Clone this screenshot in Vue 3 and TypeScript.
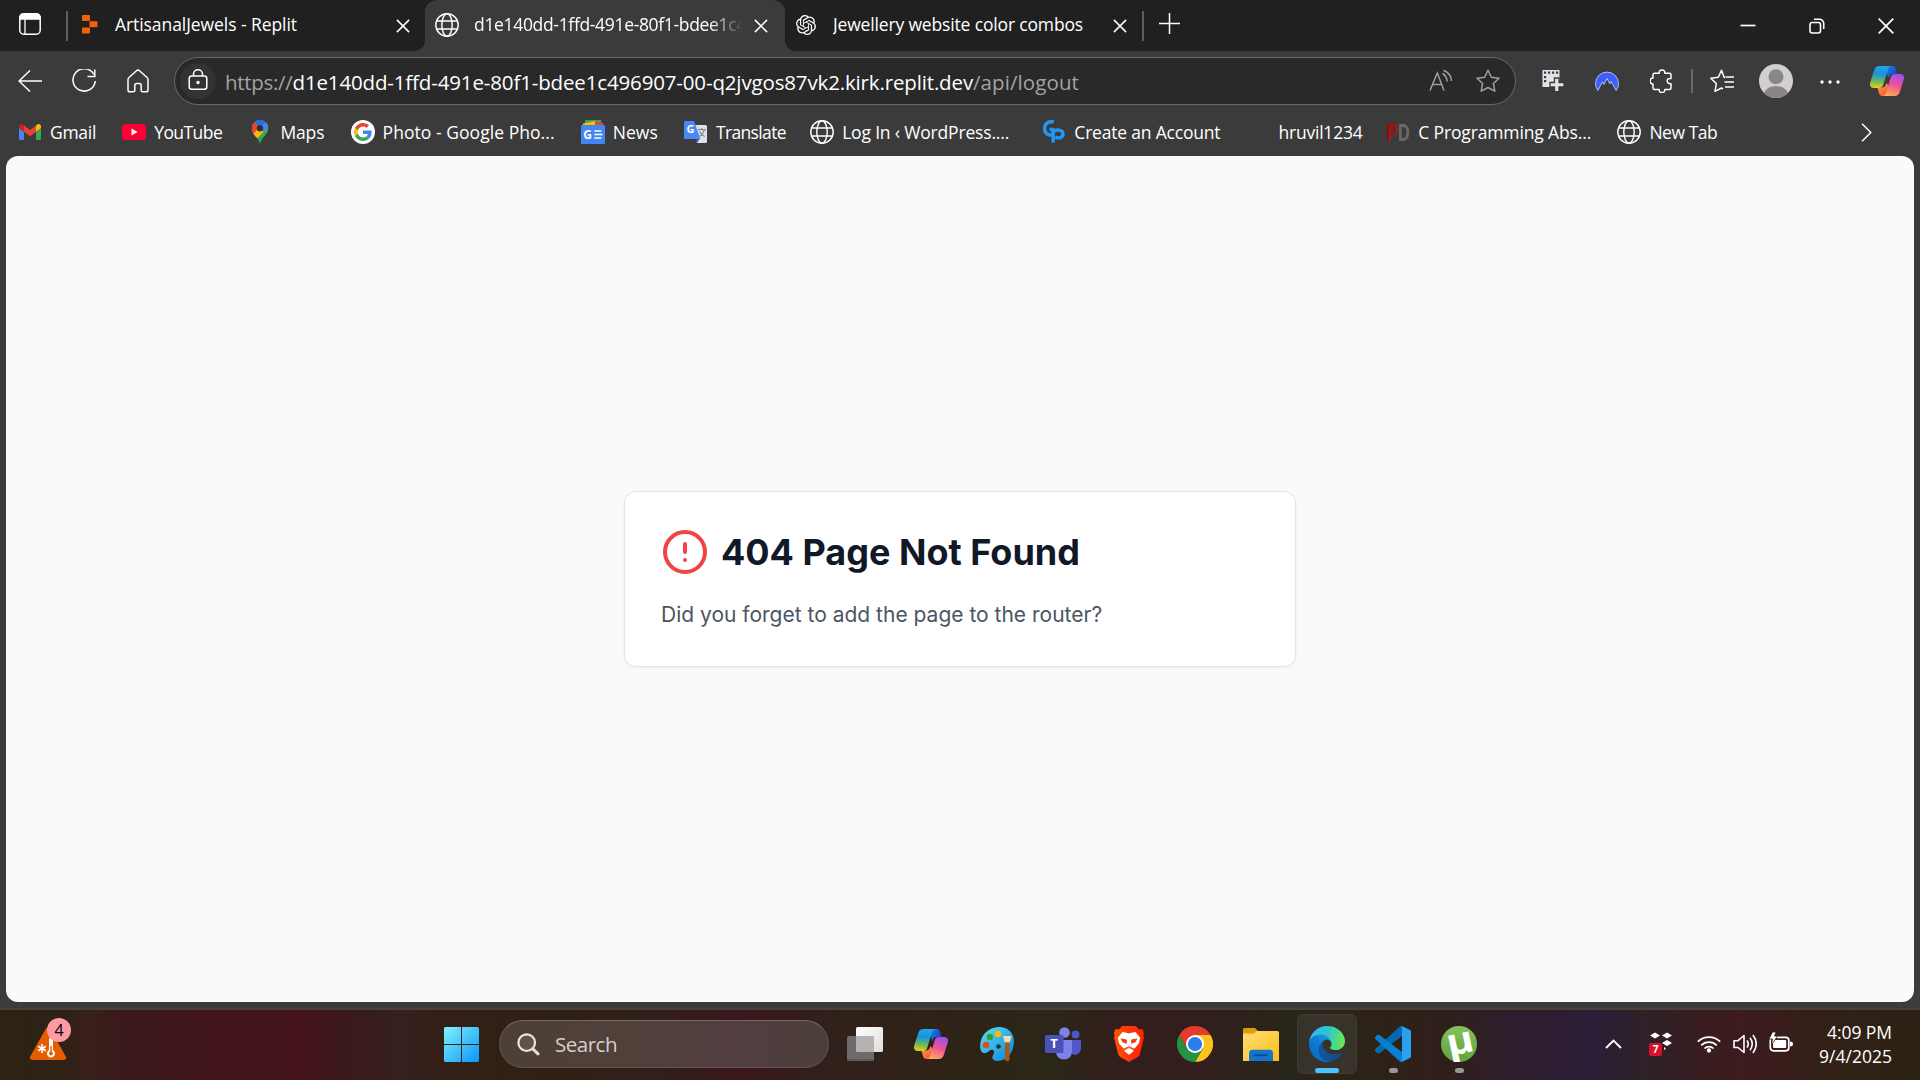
<script setup lang="ts">
import type { Directive } from 'vue'

interface Glyph { char: string; x: number; y: number; size: number; fill: string; length?: number; turn?: number }
interface Bookmark { icon: string; label: string; width: number; after?: number; glyphs?: Glyph[] }
interface TaskItem { icon: string; state?: 'active' | 'open'; glyph?: Glyph }

const bookmarks: Bookmark[] = [
  { icon: 'gmail', label: 'Gmail', width: 46 },
  { icon: 'youtube', label: 'YouTube', width: 68 },
  { icon: 'maps', label: 'Maps', width: 44 },
  { icon: 'google', label: 'Photo - Google Pho...', width: 172 },
  { icon: 'news', label: 'News', width: 45, glyphs: [{ char: 'G', x: 2.3, y: 18.8, size: 12, fill: '#fff' }] },
  { icon: 'translate', label: 'Translate', width: 70, after: -2, glyphs: [{ char: 'G', x: 2.4, y: 13, size: 11, fill: '#fff' }] },
  { icon: 'globe', label: 'Log In ‹ WordPress....', width: 167, after: 7 },
  { icon: 'gp', label: 'Create an Account', width: 146 },
  { icon: 'blank', label: 'hruvil1234', width: 84, after: -2.5 },
  {
    icon: 'blank', label: 'C Programming Abs...', width: 173,
    glyphs: [
      { char: 'P', x: -0.5, y: 21, size: 24, fill: '#a80d0d', length: 12.5 },
      { char: 'D', x: 11.5, y: 21, size: 24, fill: '#6b6868', length: 12.5 },
    ],
  },
  { icon: 'globe', label: 'New Tab', width: 68 },
]

const tasks: TaskItem[] = [
  { icon: 'taskview' },
  { icon: 'copilot' },
  { icon: 'paint' },
  { icon: 'teams', glyph: { char: 'T', x: 5.2, y: 22.3, size: 13, fill: '#fff' } },
  { icon: 'brave' },
  { icon: 'chrome' },
  { icon: 'explorer' },
  { icon: 'edge', state: 'active' },
  { icon: 'vscode', state: 'open' },
  { icon: 'utorrent', state: 'open', glyph: { char: 'µ', x: 6, y: 28, size: 37, fill: '#fff', length: 27, turn: -12 } },
]

// Spreads a label over a given width by adjusting its tracking.
const vFit: Directive<HTMLElement, number> = {
  mounted(el, { value }) {
    const count = (el.textContent ?? '').length
    const natural = el.getBoundingClientRect().width
    if (count > 0) el.style.letterSpacing = `${((value - natural) / count).toFixed(3)}px`
  },
}
</script>

<template>
  <svg class="sprite" width="0" height="0" aria-hidden="true">
    <defs>
      <linearGradient id="winG" x1="0" y1="0" x2="1" y2="1"><stop offset="0" stop-color="#7ff3ff" /><stop offset=".5" stop-color="#45c4fb" /><stop offset="1" stop-color="#0a95fb" /></linearGradient>
      <linearGradient id="cpA" x1=".3" y1="0" x2=".2" y2="1"><stop offset="0" stop-color="#1fa5e8" /><stop offset=".35" stop-color="#1a91e0" /><stop offset=".7" stop-color="#6cbb58" /><stop offset="1" stop-color="#f5cf10" /></linearGradient>
      <linearGradient id="cpB" x1=".7" y1="0" x2=".4" y2="1"><stop offset="0" stop-color="#a04df0" /><stop offset=".5" stop-color="#ee5296" /><stop offset="1" stop-color="#fda858" /></linearGradient>
      <linearGradient id="cpC" x1="0" y1="0" x2="1" y2=".6"><stop offset="0" stop-color="#1a7fe8" /><stop offset="1" stop-color="#1646c4" /></linearGradient>
      <linearGradient id="cpD" x1="0" y1="0" x2="1" y2="1"><stop offset="0" stop-color="#fda93e" /><stop offset="1" stop-color="#ef4043" /></linearGradient>
      <linearGradient id="paintG" x1="0" y1="0" x2="1" y2="1"><stop offset="0" stop-color="#5ae0fb" /><stop offset="1" stop-color="#0c80d8" /></linearGradient>
      <linearGradient id="braveG" x1="0" y1="0" x2="1" y2="0"><stop offset="0" stop-color="#ff5500" /><stop offset=".6" stop-color="#ff3010" /><stop offset="1" stop-color="#ff2000" /></linearGradient>
      <linearGradient id="folderG" x1="0" y1="0" x2="1" y2="1"><stop offset="0" stop-color="#ffdf73" /><stop offset="1" stop-color="#fbbc1c" /></linearGradient>
      <linearGradient id="edA" gradientUnits="userSpaceOnUse" x1="63" y1="177" x2="241" y2="177"><stop offset="0" stop-color="#0c59a4" /><stop offset="1" stop-color="#114a8b" /></linearGradient>
      <linearGradient id="edB" gradientUnits="userSpaceOnUse" x1="157" y1="100" x2="46" y2="221"><stop offset="0" stop-color="#1b9de2" /><stop offset=".4" stop-color="#1280d4" /><stop offset="1" stop-color="#0b6cc5" /></linearGradient>
      <linearGradient id="edC" gradientUnits="userSpaceOnUse" x1="10" y1="60" x2="250" y2="110"><stop offset="0" stop-color="#35b8f1" /><stop offset=".45" stop-color="#2cc3d4" /><stop offset=".75" stop-color="#4ad98a" /><stop offset="1" stop-color="#6be94c" /></linearGradient>
      <linearGradient id="viewG" x1="0" y1="0" x2="1" y2="1"><stop offset="0" stop-color="#ffffff" /><stop offset="1" stop-color="#dddddd" /></linearGradient>
      <linearGradient id="utG" x1="0" y1="0" x2="0" y2="1"><stop offset="0" stop-color="#85c15a" /><stop offset="1" stop-color="#61a33c" /></linearGradient>
      <clipPath id="pinClip"><path d="M8.5 0A8.3 8.3 0 0 0 .2 8.3c0 2.6 1 4.400 2.600 6.500C5 17.700 7 19 8.500 24c1.500-5 3.500-6.300 5.700-9.200 1.600-2.100 2.600-3.900 2.600-6.500A8.300 8.300 0 0 0 8.500 0Z" /></clipPath>
    </defs>

    <symbol id="i-blank" viewBox="0 0 24 24" />
    <symbol id="i-globe" viewBox="0 0 24 24">
      <g fill="none" stroke="#fff" stroke-width="1.400"><circle cx="12" cy="12" r="11.200" /><ellipse cx="12" cy="12" rx="5.200" ry="11.200" /><path d="M1.800 8h20.400M1.800 16h20.400" /></g>
    </symbol>
    <symbol id="i-close" viewBox="0 0 14 14"><path d="M.9.900l12.200 12.200M13.100.900L.9 13.100" stroke="#fff" stroke-width="1.500" fill="none" /></symbol>
    <symbol id="i-gmail" viewBox="0 0 24 24">
      <path fill="#4285f4" d="M1 8l5 3.700V20H2.500A1.500 1.500 0 0 1 1 18.500Z" /><path fill="#34a853" d="M23 8l-5 3.700V20h3.500a1.500 1.500 0 0 0 1.500-1.500Z" />
      <path fill="#ea4335" d="M5.500 5.200L12 10.100l6.500-4.900v6.200L12 16.300l-6.500-4.900Z" /><path fill="#c5221f" d="M1 6.300C1 4.200 3.500 3.200 5 4.700l1 .8v6.200L1 8Z" /><path fill="#fbbc04" d="M23 6.300c0-2.100-2.500-3.100-4-1.600l-1 .8v6.200L23 8Z" />
    </symbol>
    <symbol id="i-youtube" viewBox="0 0 24 24"><rect y="4" width="24" height="16" rx="3.500" fill="#ff0033" /><path d="M9.500 8.600v6.800l6-3.400Z" fill="#fff" /></symbol>
    <symbol id="i-maps" viewBox="0 0 24 24">
      <g transform="translate(3.500)" clip-path="url(#pinClip)"><rect width="17" height="24" fill="#34a853" /><path d="M0 15L17-2v9L5 19Z" fill="#fbbc04" /><path d="M17-1v8L12 12 9 9l5-9Z" fill="#4285f4" /><path d="M0 0h17L7 9Z" fill="#1a73e8" /><path d="M-1 2h4l6 5-7 8-3-3Z" fill="#ea4335" /><path d="M1 15l5-6 3 3-6 6Z" fill="#fbbc04" /><circle cx="8.500" cy="8.200" r="3.200" fill="#303134" /></g>
    </symbol>
    <symbol id="i-google" viewBox="0 0 24 24">
      <circle cx="12" cy="12" r="12" fill="#fff" />
      <g transform="translate(3 3) scale(.375)"><path fill="#EA4335" d="M24 9.500c3.540 0 6.710 1.220 9.210 3.600l6.850-6.850C35.900 2.380 30.470 0 24 0 14.620 0 6.510 5.380 2.560 13.220l7.980 6.190C12.430 13.720 17.740 9.500 24 9.500z" /><path fill="#4285F4" d="M46.980 24.550c0-1.570-.15-3.090-.38-4.550H24v9.020h12.940c-.58 2.960-2.260 5.480-4.780 7.180l7.730 6c4.510-4.180 7.090-10.360 7.090-17.650z" /><path fill="#FBBC05" d="M10.530 28.590c-.48-1.450-.76-2.990-.76-4.590s.27-3.140.76-4.590l-7.980-6.190C.92 16.460 0 20.120 0 24c0 3.880.92 7.540 2.560 10.780l7.970-6.190z" /><path fill="#34A853" d="M24 48c6.480 0 11.930-2.130 15.890-5.810l-7.730-6c-2.150 1.450-4.920 2.300-8.160 2.300-6.260 0-11.570-4.220-13.470-9.910l-7.980 6.190C6.510 42.620 14.620 48 24 48z" /></g>
    </symbol>
    <symbol id="i-news" viewBox="0 0 24 24">
      <path fill="#34a853" d="M4 0h16v6H4Z" /><path fill="#fbbc04" d="M2 3.500L14 1l3 6H2Z" /><path fill="#ea4335" d="M14 1.500l8.500 1.700L21 7h-7Z" /><rect y="5" width="24" height="19" rx="1" fill="#4285f4" />
      <path stroke="#fff" stroke-width="1.700" d="M13.300 11h7M13.300 14.500h8.200M13.300 18h7" />
    </symbol>
    <symbol id="i-translate" viewBox="0 0 24 24">
      <path fill="#dfe1e5" d="M9 5h12.500A1.500 1.500 0 0 1 23 6.500v15a1.500 1.500 0 0 1-1.500 1.500H13Z" /><path fill="#4b3fc9" d="M11 18h5l-3 5Z" /><path fill="#4a89f3" d="M1.500 1H10l6.500 18H1.500A1.500 1.500 0 0 1 0 17.500v-15A1.500 1.500 0 0 1 1.500 1Z" />
      <path d="M14 9.700h7.800M17.700 8v1.700M20.500 9.700c-.8 3-2.500 5-5 6.800M15.500 11.500c1 2 3 4 5.200 5" stroke="#7d8f96" stroke-width="1.200" fill="none" />
    </symbol>
    <symbol id="i-gp" viewBox="0 0 24 24">
      <path d="M11.700 2.200C7.500.500 2.600 3.200 2.600 8.500c0 5 4.300 7.700 8.600 5.800V9.500H7.500M11.200 22.500v-9c0-5 9.800-4.500 9.800.300 0 4-4.500 5-7.700 3.300" stroke="#2196f3" stroke-width="3.500" fill="none" stroke-linejoin="round" />
    </symbol>

    <symbol id="i-copilot" viewBox="0 0 34 30">
      <path d="M17 0h5.500c2 0 3 1 3.700 3.200L27.500 8H23c-2.800 0-4 1.500-4.700 4L17 8Z" fill="url(#cpC)" />
      <path d="M7.500 21.500h4c3 0 4-1.500 5-4.500l4 5-2 6c-.5 1.300-1.300 2-2.500 2h-3.500c-2 0-3-1-3.600-3Z" fill="url(#cpD)" />
      <path d="M9.500 0H22c-2.200 0-3.500 1.400-4.300 4l-4.200 14c-.8 2.700-2 4-4.500 4H4c-3.500 0-4.800-2.300-3.600-6L4.200 4C5.100 1.300 6.700 0 9.500 0Z" fill="url(#cpA)" />
      <path d="M24.500 30H12c2.200 0 3.500-1.400 4.300-4l4.200-14c.8-2.700 2-4 4.500-4h5c3.500 0 4.800 2.300 3.600 6l-3.800 12c-.9 2.700-2.500 4-5.300 4Z" fill="url(#cpB)" />
    </symbol>
    <symbol id="i-taskview" viewBox="0 0 36 36"><rect x="9" y="1" width="27" height="25" rx="1.500" fill="url(#viewG)" /><rect y="10" width="27" height="25" rx="1.500" fill="#6d6a69" /><path d="M9 10h18v16H10.500A1.500 1.500 0 0 1 9 24.500Z" fill="#b4b3b2" /><path d="M0 34h27" stroke="#514e4d" /></symbol>
    <symbol id="i-paint" viewBox="0 0 36 36">
      <path d="M20 1c9 0 15 6 15 14.500C35 25 29 35 18.500 35c-5 0-6.500-3-4-6.500 2-3.500-1-6.500-4.500-3.500C7 28 3 28 1.700 24 -1 12 8 1 20 1Z" fill="url(#paintG)" /><circle cx="19.500" cy="20.500" r="2.300" fill="#2a2c25" /><circle cx="11" cy="11" r="3.200" fill="#33a02c" /><circle cx="19" cy="8" r="3.300" fill="#fbb80b" /><circle cx="7" cy="19" r="3.300" fill="#e5491b" />
      <path d="M24 10h8.500l-1.800 6.500h-5Z" fill="#f6d9b5" /><path d="M26 16.500h4.500V34q-2.200 2.500-4.500 0Z" fill="#a85a14" />
    </symbol>
    <symbol id="i-teams" viewBox="0 0 36 36">
      <circle cx="30.500" cy="8.500" r="3.900" fill="#4f56c3" /><circle cx="19.500" cy="6.500" r="5.300" fill="#7b83eb" /><path d="M25 14h11v8c0 5-4 8-9 6Z" fill="#5059c9" /><path d="M12 14h15v11c0 5-3.300 8.500-8 8.500S11 30 11 25Z" fill="#7b83eb" /><rect y="9" width="18.500" height="18" rx="1.500" fill="#4a52b8" />
    </symbol>
    <symbol id="i-brave" viewBox="0 0 36 36">
      <path d="M11 0h14l3 3.500 3.500-.5 1.500 4-.7 2.500.7 2-4 16c-.5 2-1.500 3-3 4L18 36l-8-4.500c-1.500-1-2.500-2-3-4l-4-16 .7-2L3 7l1.500-4 3.500.500Z" fill="url(#braveG)" />
      <path d="M11.500 6l4 .8 2.500.6 2.500-.6 4-.8 4.700 5.700-.7 3.300-.5 2.500-4.500 5-1.500.5-4-1.800-4 1.800-1.500-.5-4.500-5L7.500 15l-.7-3.300Z" fill="#fff" />
      <path d="M13.500 24.200L18 22l4.500 2.200.2.800-4.700 3.700-4.700-3.700Z" fill="#fff" />
      <path d="M9.500 12.500l5.500.8 1.200 1.500-.7 3-4-1.500ZM26.500 12.500l-5.500.8-1.200 1.500.7 3 4-1.500Z" fill="#fa3b12" />
      <path d="M13 23l5-2.300 5 2.300" fill="none" stroke="#fa3b12" stroke-width="1" />
    </symbol>
    <symbol id="i-chrome" viewBox="0 0 36 36"><path d="M18 9H33.590A18 18 0 0 1 18 36L25.800 22.500Z" fill="#fcc31e" /><path d="M2.410 9A18 18 0 0 0 18 36L25.800 22.500 10.200 22.500Z" fill="#229342" /><path d="M2.410 9A18 18 0 0 1 33.590 9H18L10.200 22.500Z" fill="#e33b2e" /><circle cx="18" cy="18" r="9" fill="#fff" /><circle cx="18" cy="18" r="7.100" fill="#2b7de9" /></symbol>
    <symbol id="i-explorer" viewBox="0 0 36 36"><path d="M0 3.500A1.500 1.500 0 0 1 1.500 2H12l3 3-3 5H0Z" fill="#e09d07" /><path d="M0 7.500h11l3-2.500h20.500A1.500 1.500 0 0 1 36 6.500V35H0Z" fill="url(#folderG)" /><path d="M6 35V27.500c0-2.500 1.300-3.800 3.500-3.800h17c2.200 0 3.500 1.300 3.500 3.800V35Z" fill="#1474c8" /><path d="M11 29.300h14" stroke="#0b4b8c" stroke-width="1.700" /></symbol>
    <symbol id="i-edge" viewBox="0 0 256 256">
      <path transform="translate(-4.630 -4.920)" fill="url(#edA)" d="M235.680 195.460a93.730 93.730 0 0 1-10.540 4.710 101.870 101.870 0 0 1-35.900 6.460c-47.320 0-88.540-32.550-88.540-74.320A31.480 31.480 0 0 1 117.130 105c-42.800 1.800-53.800 46.400-53.800 72.530 0 73.880 68.090 81.370 82.760 81.370 7.910 0 19.840-2.300 27-4.560l1.310-.44a128.340 128.340 0 0 0 66.600-52.800 4 4 0 0 0-5.320-5.640z" />
      <path transform="translate(-4.630 -4.920)" fill="url(#edB)" d="M110.340 246.340A79.200 79.200 0 0 1 87.600 225a80.720 80.720 0 0 1 29.530-120c3.120-1.470 8.450-4.130 15.540-4a32.350 32.350 0 0 1 25.690 13 31.880 31.880 0 0 1 6.360 18.660c0-.21 24.460-79.600-80-79.600-43.900 0-80 41.660-80 78.210a130.150 130.150 0 0 0 12.110 56 128 128 0 0 0 156.380 67.110 75.550 75.550 0 0 1-62.780-8z" />
      <path fill="url(#edC)" d="M152.290 148.860c-.81 1.050-3.300 2.500-3.300 5.660 0 2.610 1.700 5.120 4.720 7.230 14.380 10 41.490 8.680 41.560 8.680a59.560 59.560 0 0 0 30.270-8.350A61.380 61.380 0 0 0 256 109.190c.26-22.410-8-37.310-11.340-43.910C223.460 23.840 177.720 0 128 0A128 128 0 0 0 0 126.200c.48-36.540 36.800-66.050 80-66.050 3.500 0 23.460.34 42 10.070 16.340 8.580 24.900 18.940 30.850 29.210 6.180 10.670 7.280 24.150 7.280 29.520s-2.740 13.330-7.840 19.910z" />
    </symbol>
    <symbol id="i-vscode" viewBox="0 0 24 24">
      <path fill="#0a7fd0" d="M23.150 2.587L18.210.210a1.494 1.494 0 0 0-1.705.29l-9.460 8.630-4.120-3.128a.999.999 0 0 0-1.276.057L.327 7.261A1 1 0 0 0 .326 8.740L3.899 12 .326 15.260a1 1 0 0 0 .001 1.479L1.650 17.940a.999.999 0 0 0 1.276.057l4.120-3.128 9.460 8.630a1.492 1.492 0 0 0 1.704.29l4.942-2.377A1.500 1.500 0 0 0 24 20.060V3.939a1.500 1.500 0 0 0-.85-1.352zm-5.146 14.861L10.826 12l7.178-5.448v10.896z" />
      <path fill="#0468b0" d="M16.500.5L.327 15.260a1 1 0 0 0 0 1.480l1.323 1.200a1 1 0 0 0 1.276.057L18.004 6.552V0Z" />
      <path fill="#0a7fd0" d="M.326 8.740a1 1 0 0 1 0-1.480l1.323-1.200a1 1 0 0 1 1.276-.057L18.004 17.448V24l-1.500-.500Z" />
      <path fill="#2aa1f0" d="M17.500 0l5.650 2.587A1.500 1.500 0 0 1 24 3.939V20.060a1.500 1.500 0 0 1-.85 1.352L17.500 24l.504-1.500V1.500Z" />
    </symbol>
    <symbol id="i-utorrent" viewBox="0 0 36 36"><circle cx="18" cy="18" r="18" fill="url(#utG)" /></symbol>
  </svg>

  <div class="screen">
    <header class="tabs">
      <div class="workspaces">
        <svg width="22" height="22" viewBox="0 0 22 22"><rect x=".8" y=".8" width="20.400" height="20.400" rx="4" fill="none" stroke="#fff" stroke-width="1.500" /><path d="M.8 6V4.500A3.700 3.700 0 0 1 4.500.8h13a3.700 3.700 0 0 1 3.700 3.700V6ZM6 6v15" fill="#fff" stroke="#fff" stroke-width="1.300" /></svg>
      </div>
      <i class="divider"></i>
      <div class="tab first">
        <svg class="fav" width="16" height="19" viewBox="0 0 16 19"><g fill="#f26207"><rect width="8" height="6" rx="1" /><rect x="7.500" y="6.300" width="8" height="6" rx="1" /><rect y="12.500" width="8" height="6" rx="1" /></g></svg>
        <span class="title"><span v-fit="182">ArtisanalJewels - Replit</span></span>
        <svg class="x"><use href="#i-close" /></svg>
      </div>
      <div class="tab active">
        <svg class="fav" width="24" height="24"><use href="#i-globe" /></svg>
        <span class="title fade"><span v-fit="272">d1e140dd-1ffd-491e-80f1-bdee1c4</span></span>
        <svg class="x"><use href="#i-close" /></svg>
      </div>
      <div class="tab third">
        <svg class="fav" width="20" height="20" viewBox="0 0 24 24"><path fill="#fff" d="M22.2819 9.8211a5.9847 5.9847 0 0 0-.5157-4.9108 6.0462 6.0462 0 0 0-6.5098-2.9A6.0651 6.0651 0 0 0 4.9807 4.1818a5.9847 5.9847 0 0 0-3.9977 2.9 6.0462 6.0462 0 0 0 .7427 7.0966 5.98 5.98 0 0 0 .511 4.9107 6.051 6.051 0 0 0 6.5146 2.9001A5.9847 5.9847 0 0 0 13.2599 24a6.0557 6.0557 0 0 0 5.7718-4.2058 5.9894 5.9894 0 0 0 3.9977-2.9001 6.0557 6.0557 0 0 0-.7475-7.0729zm-9.022 12.6081a4.4755 4.4755 0 0 1-2.8764-1.0408l.1419-.0804 4.7783-2.7582a.7948.7948 0 0 0 .3927-.6813v-6.7369l2.02 1.1686a.071.071 0 0 1 .038.052v5.5826a4.504 4.504 0 0 1-4.4945 4.4944zm-9.6607-4.1254a4.4708 4.4708 0 0 1-.5346-3.0137l.142.0852 4.783 2.7582a.7712.7712 0 0 0 .7806 0l5.8428-3.3685v2.3324a.0804.0804 0 0 1-.0332.0615L9.74 19.9502a4.4992 4.4992 0 0 1-6.1408-1.6464zM2.3408 7.8956a4.485 4.485 0 0 1 2.3655-1.9728V11.6a.7664.7664 0 0 0 .3879.6765l5.8144 3.3543-2.0201 1.1685a.0757.0757 0 0 1-.071 0l-4.8303-2.7865A4.504 4.504 0 0 1 2.3408 7.872zm16.5963 3.8558L13.1038 8.364 15.1192 7.2a.0757.0757 0 0 1 .071 0l4.8303 2.7913a4.4944 4.4944 0 0 1-.6765 8.1042v-5.6772a.79.79 0 0 0-.407-.667zm2.0107-3.0231l-.142-.0852-4.7735-2.7818a.7759.7759 0 0 0-.7854 0L9.409 9.2297V6.8974a.0662.0662 0 0 1 .0284-.0615l4.8303-2.7866a4.4992 4.4992 0 0 1 6.6802 4.66zM8.3065 12.863l-2.02-1.1638a.0804.0804 0 0 1-.038-.0567V6.0742a4.4992 4.4992 0 0 1 7.3757-3.4537l-.142.0805L8.704 5.459a.7948.7948 0 0 0-.3927.6813zm1.0976-2.3654l2.602-1.4998 2.6069 1.4998v2.9994l-2.5974 1.4997-2.6067-1.4997Z" /></svg>
        <span class="title"><span v-fit="250">Jewellery website color combos</span></span>
        <svg class="x"><use href="#i-close" /></svg>
      </div>
      <i class="divider"></i>
      <svg class="plus" width="21" height="21" viewBox="0 0 21 21"><path d="M10.500 0v21M0 10.500h21" stroke="#fff" stroke-width="1.500" /></svg>
      <div class="window">
        <svg width="16" height="16" viewBox="0 0 16 16"><path d="M.5 7.500h15" stroke="#fff" stroke-width="1.700" /></svg>
        <svg width="16" height="16" viewBox="0 0 16 16" fill="none" stroke="#fff" stroke-width="1.600"><rect x="1" y="4.500" width="10.500" height="10.500" rx="2.200" /><path d="M5 1.300h5.500a4.200 4.200 0 0 1 4.200 4.200V11" /></svg>
        <svg width="16" height="16" viewBox="0 0 16 16"><path d="M.7.700l14.600 14.600M15.300.700L.7 15.300" stroke="#fff" stroke-width="1.700" /></svg>
      </div>
    </header>

    <nav class="toolbar">
      <svg width="24" height="24" viewBox="0 0 24 24" class="line"><path d="M24 12H1M12 1.500L1 12l11 10.500" /></svg>
      <svg width="24" height="24" viewBox="0 0 24 24" class="line r"><path d="M22 5.500A11.200 11.200 0 1 0 23.300 12M22.800.500V7.500H15.500" /></svg>
      <svg width="24" height="24" viewBox="0 0 24 24" class="line h"><path d="M2 10.500q0-1.200 1-2L10.500 1.700q1.500-1.200 3 0L21 8.500q1 .8 1 2V21q0 1.800-1.800 1.800H16.500q-1.300 0-1.300-1.300V16.500q0-2-1.700-2h-3q-1.700 0-1.700 2v5q0 1.300-1.300 1.300H3.800Q2 22.800 2 21Z" /></svg>
      <div class="address">
        <span class="lock"><svg width="20" height="22" viewBox="0 0 20 22" class="line"><rect x="1.200" y="7" width="17.600" height="13.300" rx="2.500" /><path d="M5.500 7V5.200a4.500 4.500 0 0 1 9 0V7" /><circle cx="10" cy="13.500" r="1" fill="#fff" /></svg></span>
        <span class="url"><span v-fit="67.500" class="dim">https://</span><span v-fit="680.500">d1e140dd-1ffd-491e-80f1-bdee1c496907-00-q2jvgos87vk2.kirk.replit.dev</span><span v-fit="106" class="dim">/api/logout</span></span>
        <svg class="line grey read" width="24" height="24" viewBox="0 0 24 24"><path d="M1 21.500L8.300 4l6.700 17.500M3.500 15.500h9.300M13.500 4.500q4 2 4.700 8M14.500 1.200q7.500 3 8 10.800" /></svg>
        <svg class="line grey" width="24" height="24" viewBox="0 0 24 24"><path stroke-linejoin="round" d="M12 1.200l3.300 7 7.700 1-5.600 5.300 1.400 7.700L12 18.500 5.200 22.200l1.400-7.700L1 9.200l7.700-1Z" /></svg>
      </div>
      <svg class="ext" width="24" height="24" viewBox="0 0 24 24"><path fill="#e5e1ea" fill-rule="evenodd" d="M1.500 1h17v10h-3v3.500h-4V18h-10ZM3 2.500v2.200h2.200V2.500ZM7 2.500v2.200h2.200V2.500ZM11 2.500v2.200h2.200V2.500ZM15 2.500v2.200h2.200V2.500ZM3 7v2.200h2.200V7ZM3 11v2.200h2.200V11Z" /><path fill="#e5e1ea" stroke="#3b3b3b" stroke-width="1.300" d="M13.500 9h4.500v4.500h5v4.500h-5v4.700h-4.500V18H9v-4.500h4.500Z" /></svg>
      <svg class="nord" width="24" height="24" viewBox="0 0 24 24"><path fill="#3e5fff" stroke="#e7ebff" stroke-width=".7" d="M2.800 21.500A11.500 11.500 0 1 1 21.200 21.500L16 12.500l-1.200 2.300L12 9.500l-3 6-1.500-2.500Z" /></svg>
      <svg class="line puz" width="24" height="24" viewBox="0 0 24 24"><path stroke-linejoin="round" d="M4.500 4.200H9.200Q9 1 12 1t2.800 3.200h4.700q1.500 0 1.500 1.500V9.500Q17.200 9.200 17.200 12t3.800 2.700v4.300q0 1.500-1.500 1.500h-4.700Q15 23.500 12 23.500T9.200 20.500H4.500Q3 20.500 3 19v-4Q.2 15.200.2 12T3 9V5.700Q3 4.200 4.500 4.200Z" /></svg>
      <i class="bar"></i>
      <svg class="line favs" width="24" height="24" viewBox="0 0 24 24"><path stroke-linejoin="round" d="M15 8.500h-.800L11.500 1.200 8.300 8.200.8 9.300l5.500 5.200-1.300 7.800L11.500 19l1.500.7M15.500 8h8.500M14.500 13h9.500M15 18h9" /></svg>
      <svg class="avatar" width="34" height="34" viewBox="0 0 34 34"><clipPath id="av"><circle cx="17" cy="17" r="17" /></clipPath><g clip-path="url(#av)"><rect width="34" height="34" fill="#d2d0ce" /><circle cx="17" cy="12.700" r="7.500" fill="#8a8685" /><ellipse cx="17" cy="33" rx="13" ry="11" fill="#8a8685" /></g></svg>
      <svg class="dots" width="20" height="4" viewBox="0 0 20 4" fill="#fff"><circle cx="2" cy="2" r="1.700" /><circle cx="10" cy="2" r="1.700" /><circle cx="18" cy="2" r="1.700" /></svg>
      <svg class="cop" width="34" height="30"><use href="#i-copilot" /></svg>
    </nav>

    <div class="bookmarks">
      <a v-for="b in bookmarks" :key="b.label" :style="{ marginRight: (b.after ?? 0) + 'px' }">
        <svg class="mark" width="24" height="24"><use :href="'#i-' + b.icon" /><text v-for="g in b.glyphs" :key="g.char" :x="g.x" :y="g.y" :font-size="g.size" :fill="g.fill" :textLength="g.length" lengthAdjust="spacingAndGlyphs">{{ g.char }}</text></svg>
        <span class="label" :style="{ width: b.width + 'px' }"><span v-fit="b.width">{{ b.label }}</span></span>
      </a>
      <svg class="more" width="11" height="19" viewBox="0 0 11 19"><path d="M1 .800l8.800 8.700L1 18.200" stroke="#fff" stroke-width="1.500" fill="none" /></svg>
    </div>

    <main class="page">
      <section class="card">
        <div class="heading">
          <svg width="48" height="48" viewBox="0 0 24 24" fill="none" stroke="#ef4444" stroke-width="2" stroke-linecap="round"><circle cx="12" cy="12" r="10" /><path d="M12 8v4M12 16h.010" /></svg>
          <h1>404 Page Not Found</h1>
        </div>
        <p>Did you forget to add the page to the router?</p>
      </section>
    </main>

    <footer class="taskbar">
      <div class="weather">
        <svg width="36" height="34" viewBox="0 0 36 34"><path d="M18 3L33.500 30.500H2.500Z" fill="#e65c00" stroke="#e65c00" stroke-width="5" stroke-linejoin="round" /><path d="M12 17v9M8.100 19.200l7.800 4.600M15.900 19.200l-7.800 4.600" stroke="#fff" stroke-width="1.600" /><path d="M19 12.500a2 2 0 0 1 4 0V23a4 4 0 1 1-4 0Z" fill="#fff" /><path d="M21 19v7" stroke="#e65c00" stroke-width="1.500" /><circle cx="21" cy="26.500" r="2" fill="#e65c00" /></svg>
        <span class="count">4</span>
      </div>
      <svg class="start" width="35" height="35" viewBox="0 0 35 35"><path fill="url(#winG)" d="M1.500 0H17v17H0V1.500A1.500 1.500 0 0 1 1.500 0ZM18 0h15.500A1.500 1.500 0 0 1 35 1.500V17H18ZM0 18h17v17H1.500A1.500 1.500 0 0 1 0 33.500ZM18 18h17v15.500a1.500 1.500 0 0 1-1.500 1.500H18Z" /></svg>
      <div class="search">
        <svg width="23" height="23" viewBox="0 0 23 23"><circle cx="9.700" cy="9.700" r="8.300" fill="rgba(255,255,255,.1)" stroke="#e9e7e5" stroke-width="2.200" /><path d="M15.800 15.800l5.200 5" stroke="#e0dedc" stroke-width="3" stroke-linecap="round" /></svg>
        <span v-fit="62">Search</span>
      </div>
      <div class="apps">
        <div v-for="t in tasks" :key="t.icon" class="app" :class="t.state === 'active' ? 'current' : t.state">
          <svg class="mark" :width="t.icon === 'copilot' ? 34 : 36" :height="t.icon === 'copilot' ? 30 : 36"><use :href="'#i-' + t.icon" /><text v-if="t.glyph" :x="t.glyph.x" :y="t.glyph.y" :font-size="t.glyph.size" :fill="t.glyph.fill" :textLength="t.glyph.length" lengthAdjust="spacingAndGlyphs" :transform="`rotate(${t.glyph.turn ?? 0} 18 18)`">{{ t.glyph.char }}</text></svg>
        </div>
      </div>
      <div class="tray">
        <svg width="17" height="10" viewBox="0 0 17 10"><path d="M1 9l7.500-7.500L16 9" stroke="#fff" stroke-width="1.900" fill="none" /></svg>
        <div class="dropbox">
          <svg width="24" height="24" viewBox="0 0 24 24" fill="#fff"><path d="M1 3.500L6 .5l5 3-5 3ZM13 3.500l5-3 5 3-5 3ZM13 11l5-3 5 3-5 3ZM15 15l2 1.500-2 1.500Z" /></svg>
          <span>7</span>
        </div>
        <svg class="wifi" width="24" height="18" viewBox="0 0 24 18" fill="none" stroke="#fff" stroke-width="1.700"><path d="M.8 6.700a15.800 15.800 0 0 1 22.400 0M4.200 10.300a11 11 0 0 1 15.600 0M7.500 13.500a6.400 6.400 0 0 1 9 0" /><circle cx="12" cy="15.500" r="1.300" fill="#fff" /></svg>
        <svg class="sound" width="24" height="20" viewBox="0 0 24 20" fill="none" stroke="#fff" stroke-width="1.600"><path stroke-linejoin="round" d="M1 6.700h4L11 1.500v17L5 13.500H1ZM14 6.500q2.500 3.500 0 7M17 3.800q4.500 6.200 0 12.400M20 1q6.500 9 0 18" /></svg>
        <svg class="bat" width="24" height="21" viewBox="0 0 24 21"><rect x="1.300" y="5.300" width="18.500" height="13.500" rx="3" fill="none" stroke="#fff" stroke-width="1.700" /><rect x="4" y="8" width="13.200" height="8" rx="1" fill="#fff" /><path d="M21 9.500q3 0 3 2.500t-3 2.500Z" fill="#fff" /><path d="M3.500 0H7L5.500 4h3L2.500 13 3.500 7H0Z" fill="#fff" stroke="#3d1c1d" stroke-width=".8" /></svg>
        <div class="clock"><span v-fit="65">4:09 PM</span><span v-fit="73">9/4/2025</span></div>
      </div>
    </footer>
  </div>
</template>

<style>
body { margin: 0; overflow: hidden; background: #3b3b3b; }
</style>

<style scoped>
* { box-sizing: border-box; }
.sprite { position: absolute; }
svg { display: block; flex: none; }
.mark text { font-family: "Open Sans", sans-serif; font-weight: 700; }
.screen { width: 1920px; height: 1080px; display: flex; flex-direction: column; background: #3b3b3b; color: #fff; font-family: "Open Sans", "Noto Sans", sans-serif; font-size: 17.500px; white-space: nowrap; overflow: hidden; }
.tabs { height: 51px; display: flex; align-items: center; background: #202020; flex: none; }
.workspaces { width: 66px; padding-left: 19px; margin-top: -3px; }
.divider { width: 2px; height: 30px; background: #5f5f5f; flex: none; }
.tab { display: flex; align-items: center; height: 51px; flex: none; padding-bottom: 2px; }
.first { width: 357px; padding-left: 14px; }
.title { line-height: 24px; overflow: hidden; margin-top: -2px; }
.title span { display: inline-block; }
.first .title { width: 281px; margin-left: 17px; }
.x { width: 14px; height: 14px; margin-top: 2px; }
.active { width: 360px; padding-left: 10px; background: #3b3b3b; border-radius: 12px 12px 0 0; position: relative; }
.active::before, .active::after { content: ""; position: absolute; bottom: 0; width: 10px; height: 10px; }
.active::before { left: -10px; background: radial-gradient(circle at 0 0, #202020 9.500px, #3b3b3b 10px); }
.active::after { right: -10px; background: radial-gradient(circle at 100% 0, #202020 9.500px, #3b3b3b 10px); }
.active .title { width: 269px; margin: -2px 11px 0 15px; }
.fade { mask-image: linear-gradient(90deg, #000 235px, transparent 269px); }
.third { width: 357px; padding-left: 11px; }
.third .title { width: 263px; margin: -2px 17px 0 17px; }
.plus { margin: -4px 0 0 15px; }
.window { margin-left: auto; display: flex; gap: 53px; padding-right: 26px; }

.toolbar { height: 60px; display: flex; align-items: center; padding-left: 18px; flex: none; }
.line { fill: none; stroke: #fff; stroke-width: 1.500px; }
.r, .h { margin-left: 30px; }
.address { width: 1342px; height: 48px; margin-left: 24px; display: flex; align-items: center; border: 1.500px solid #696969; border-radius: 24px; background: #292929; padding: 0 15px 0 5px; }
.lock { width: 36px; height: 36px; border-radius: 50%; background: #333; display: flex; align-items: center; justify-content: center; padding-bottom: 2px; }
.url { margin-left: 9px; font-size: 20.500px; line-height: 30px; flex: 1; margin-top: 1px; }
.url span { display: inline-block; }
.dim { color: #a3a3a3; }
.grey { stroke: #a0a0a0; }
.read { margin-right: 23px; }
.ext { margin-left: 25px; }
.nord { margin-left: 30px; }
.puz { margin-left: 31px; }
.bar { width: 2px; height: 24px; background: #696969; margin-left: 17px; }
.favs { margin-left: 17px; }
.avatar { margin-left: 25px; }
.dots { margin: 1px 0 0 27px; }
.cop { margin-left: 30px; }

.bookmarks { height: 45px; flex: none; display: flex; align-items: center; padding: 0 0 3px 18px; }
.bookmarks a { display: flex; align-items: center; gap: 8px; padding-right: 26.200px; }
.label { display: block; line-height: 24px; }
.label span { display: inline-block; }
.more { margin-left: auto; margin-right: 48px; }

.page { height: 846px; flex: none; margin: 0 6px; background: #f9fafb; border-radius: 12px; display: flex; align-items: center; justify-content: center; font-family: Inter, sans-serif; }
.card { width: 672px; height: 176px; border: 1px solid #e5e5e5; border-radius: 12px; background: #fff; box-shadow: 0 1px 3px rgba(0, 0, 0, .06); padding: 36px; }
.heading { display: flex; align-items: center; gap: 12px; margin-bottom: 24px; }
h1 { margin: 0; font-size: 36px; line-height: 48px; font-weight: 700; color: #111827; }
p { margin: 0; font-size: 21px; line-height: 30px; color: #4b5563; }

.taskbar { height: 72px; margin-top: 6px; flex: none; display: flex; align-items: center; border-top: 2px solid #4a4038; padding-bottom: 2px;
  background: linear-gradient(90deg, #2d2214 0, #2e2116 60px, #39201a 88px, #3a181a 130px, #40151b 200px, #44131b 300px, #3a191c 345px, #36201f 400px, #341f17 440px, #2f2015 550px, #30201a 640px, #3a171d 740px, #30211b 840px, #2f2217 930px, #2a2718 1050px, #331e1c 1120px, #331e1d 1190px, #28261a 1290px, #2e2117 1400px, #2f1f1c 1450px, #2e1d2c 1510px, #2c1e38 1590px, #2e2128 1645px, #3a1c1f 1710px, #3d1b1f 1740px, #361e19 1800px, #2f2216 1850px, #2c2115 1920px); }
.weather { width: 444px; padding: 0 0 0 30px; position: relative; }
.count { position: absolute; left: 47px; top: -9px; width: 24px; height: 24px; border-radius: 50%; background: #ff99a4; color: #000; font-size: 16px; line-height: 24px; text-align: center; }
.start { margin-right: 20px; }
.search { width: 330px; height: 48px; border-radius: 24px; border: 1.500px solid rgba(255, 255, 255, .1); border-top-color: rgba(255, 255, 255, .22); background: linear-gradient(90deg, #4d4035, #50403b 45%, #533d40 70%, #4c3f3b); display: flex; align-items: center; padding-left: 17px; gap: 15px; font-size: 20.500px; color: #d6d1cd; }
.apps { display: flex; gap: 6px; margin-left: 6px; }
.app { width: 60px; height: 60px; display: flex; align-items: center; justify-content: center; border-radius: 6px; border: 1px solid transparent; position: relative; }
.current { background: #37322a; border-color: #413b32; }
.current::after { content: ""; position: absolute; left: 17px; bottom: 0; width: 24px; height: 5px; border-radius: 3px; background: #4cc2ff; }
.open::after { content: ""; position: absolute; bottom: 0; left: 25px; width: 9px; height: 5px; border-radius: 3px; background: #9d9692; }
.tray { margin-left: auto; display: flex; align-items: center; padding-right: 28px; }
.dropbox { position: relative; margin-left: 27px; }
.dropbox span { position: absolute; left: 0; top: 11px; width: 13px; height: 13px; border-radius: 2px; background: #d8102a; font-size: 10px; line-height: 13px; font-weight: 700; text-align: center; }
.wifi { margin-left: 24px; }
.sound { margin-left: 12px; }
.bat { margin: -3px 0 0 12px; }
.clock { margin-left: 25px; width: 74px; display: flex; flex-direction: column; align-items: flex-end; line-height: 24px; }
</style>
